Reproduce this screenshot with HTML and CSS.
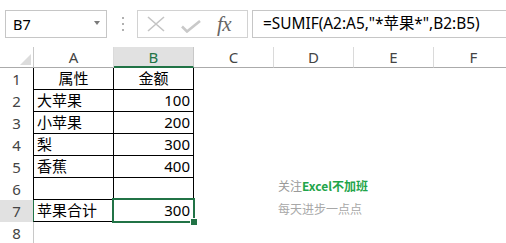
FILE: index.html
```html
<!DOCTYPE html>
<html lang="zh-CN">
<head>
<meta charset="utf-8">
<title>SUMIF</title>
<link rel="stylesheet" href="styles.css">
</head>
<body>
<div class="app">
  <div class="fbar">
    <div class="namebox"><span class="ref">B7</span><span class="caret"></span></div>
    <div class="grip"><i></i><i></i><i></i></div>
    <div class="fxbox">
      <svg class="ico-x" width="18" height="16" viewBox="0 0 18 16"><path d="M1 1 L17 15 M17 1 L1 15" stroke="#c4c4c4" stroke-width="1.6" fill="none"/></svg>
      <svg class="ico-ok" width="20" height="13" viewBox="0 0 20 13"><path d="M1 6.5 L6 11.5 L19 1" stroke="#c9c9c9" stroke-width="2.6" fill="none"/></svg>
      <span class="fx">fx</span>
    </div>
    <div class="formula">=SUMIF(A2:A5,"*苹果*",B2:B5)</div>
  </div>

  <div class="sheet">
    <div class="grid">
      <div class="corner"><span class="tri"></span></div>
      <div class="ch">A</div>
      <div class="ch ch-sel">B</div>
      <div class="ch">C</div>
      <div class="ch">D</div>
      <div class="ch">E</div>
      <div class="ch">F</div>

      <div class="rh">1</div>
      <div class="c ta tcenter">属性</div>
      <div class="c tb tcenter">金额</div>
      <div class="c"></div><div class="c"></div><div class="c"></div><div class="c"></div>

      <div class="rh">2</div>
      <div class="c ta">大苹果</div>
      <div class="c tb num">100</div>
      <div class="c"></div><div class="c"></div><div class="c"></div><div class="c"></div>

      <div class="rh">3</div>
      <div class="c ta">小苹果</div>
      <div class="c tb num">200</div>
      <div class="c"></div><div class="c"></div><div class="c"></div><div class="c"></div>

      <div class="rh">4</div>
      <div class="c ta">梨</div>
      <div class="c tb num">300</div>
      <div class="c"></div><div class="c"></div><div class="c"></div><div class="c"></div>

      <div class="rh">5</div>
      <div class="c ta">香蕉</div>
      <div class="c tb num">400</div>
      <div class="c"></div><div class="c"></div><div class="c"></div><div class="c"></div>

      <div class="rh">6</div>
      <div class="c ta"></div>
      <div class="c tb"></div>
      <div class="c"></div><div class="c"></div><div class="c"></div><div class="c"></div>

      <div class="rh rh-sel">7</div>
      <div class="c ta ta-sel">苹果合计</div>
      <div class="c tb num">300</div>
      <div class="c"></div><div class="c"></div><div class="c"></div><div class="c"></div>

      <div class="rh">8</div>
      <div class="c free-a"></div>
      <div class="c"></div>
      <div class="c"></div><div class="c"></div><div class="c"></div><div class="c"></div>
    </div>

    <div class="sel"></div>
    <div class="handle"></div>

    <div class="wm">
      <div class="wm-line"><span class="wm-gray">关注</span><span class="wm-green">Excel不加班</span></div>
      <div class="wm-line wm-sub">每天进步一点点</div>
    </div>
  </div>
</div>
</body>
</html>
```

FILE: styles.css
```css
* { box-sizing: border-box; }

html, body {
  margin: 0;
  padding: 0;
  background: #ffffff;
  overflow: hidden;
}

.app {
  width: 506px;
  height: 243px;
  overflow: hidden;
  font-family: "Noto Sans", "Noto Sans CJK SC", sans-serif;
  color: #000;
}

/* ---------- formula bar ---------- */
.fbar {
  height: 47px;
  display: flex;
  align-items: flex-start;
  padding: 10px 0 0 5px;
  white-space: nowrap;
}

.namebox {
  width: 102px;
  height: 28px;
  border: 1px solid #c6c6c6;
  display: flex;
  align-items: center;
  justify-content: space-between;
  padding: 0 6px 0 7px;
  font-size: 14.5px;
}

.ref { line-height: 26px; }

.caret {
  width: 0;
  height: 0;
  border-left: 3.5px solid transparent;
  border-right: 3.5px solid transparent;
  border-top: 4px solid #7a7a7a;
  margin-top: -3px;
}

.grip {
  width: 30px;
  height: 28px;
  display: flex;
  flex-direction: column;
  align-items: center;
  justify-content: center;
  gap: 4px;
  padding-left: 1px;
}

.grip i {
  display: block;
  width: 2px;
  height: 2px;
  background: #b0b0b0;
}

.fxbox {
  width: 111px;
  height: 28px;
  border: 1px solid #d2d2d2;
  display: flex;
  align-items: center;
  padding-left: 9px;
}

.ico-x { margin-top: 0px; }
.ico-ok { margin-left: 16px; margin-top: 4px; }

.fx {
  margin-left: 16px;
  font-family: "Liberation Serif", "DejaVu Serif", serif;
  font-style: italic;
  font-size: 21px;
  line-height: 26px;
  color: #666;
  letter-spacing: -0.5px;
}

.formula {
  margin-left: 4px;
  flex: 1 0 auto;
  height: 28px;
  border: 1px solid #c6c6c6;
  border-right: none;
  padding-left: 10px;
  font-size: 15.4px;
  line-height: 26px;
}

/* ---------- sheet ---------- */
.sheet {
  position: relative;
  height: 196px;
}

.grid {
  display: grid;
  grid-template-columns: 33px 81px repeat(5, 80px);
  grid-template-rows: 21px repeat(8, 22px);
  width: 514px;
}

.corner {
  position: relative;
  border-bottom: 1px solid #ababab;
}

.tri {
  position: absolute;
  right: 2px;
  bottom: 2px;
  width: 0;
  height: 0;
  border-left: 11px solid transparent;
  border-bottom: 11px solid #dcdcdc;
}

.ch {
  border-right: 1px solid #dadada;
  border-bottom: 1px solid #ababab;
  text-align: center;
  font-size: 15px;
  line-height: 20px;
  color: #444;
}

.ch:nth-child(2) { border-left: 1px solid #c8c8c8; }

.ch-sel {
  background: #e1e1e1;
  color: #217346;
  border-bottom: 2px solid #217346;
  border-right-color: #c8c8c8;
}

.rh {
  text-align: center;
  font-size: 15px;
  line-height: 22px;
  color: #444;
}

.rh-sel { background: #e1e1e1; }

.c {
  font-size: 15px;
  line-height: 21px;
  padding: 0 3px;
  overflow: hidden;
  white-space: nowrap;
}

.ta {
  border-left: 1px solid #000;
  border-right: 1px solid #000;
  border-bottom: 1px solid #000;
}

.ta-sel { border-left-color: #217346; }

.tb {
  border-right: 1px solid #000;
  border-bottom: 1px solid #000;
}

.free-a { border-left: 1px solid #c8c8c8; }

.tcenter { text-align: center; }
.num { text-align: right; }

/* selection overlay */
.sel {
  position: absolute;
  left: 112px;
  top: 151px;
  width: 83px;
  height: 25px;
  border: 2px solid #217346;
}

.handle {
  position: absolute;
  left: 190px;
  top: 171px;
  width: 8px;
  height: 8px;
  background: #217346;
  border: 1px solid #fff;
}

/* watermark */
.wm {
  position: absolute;
  left: 278px;
  top: 127px;
  font-family: "Noto Sans CJK SC", sans-serif;
  font-size: 12px;
  line-height: 23px;
}

.wm-gray { color: #9a9a9a; }
.wm-green { color: #1fa54a; font-weight: bold; }
.wm-sub { color: #a8a8a8; }
```
